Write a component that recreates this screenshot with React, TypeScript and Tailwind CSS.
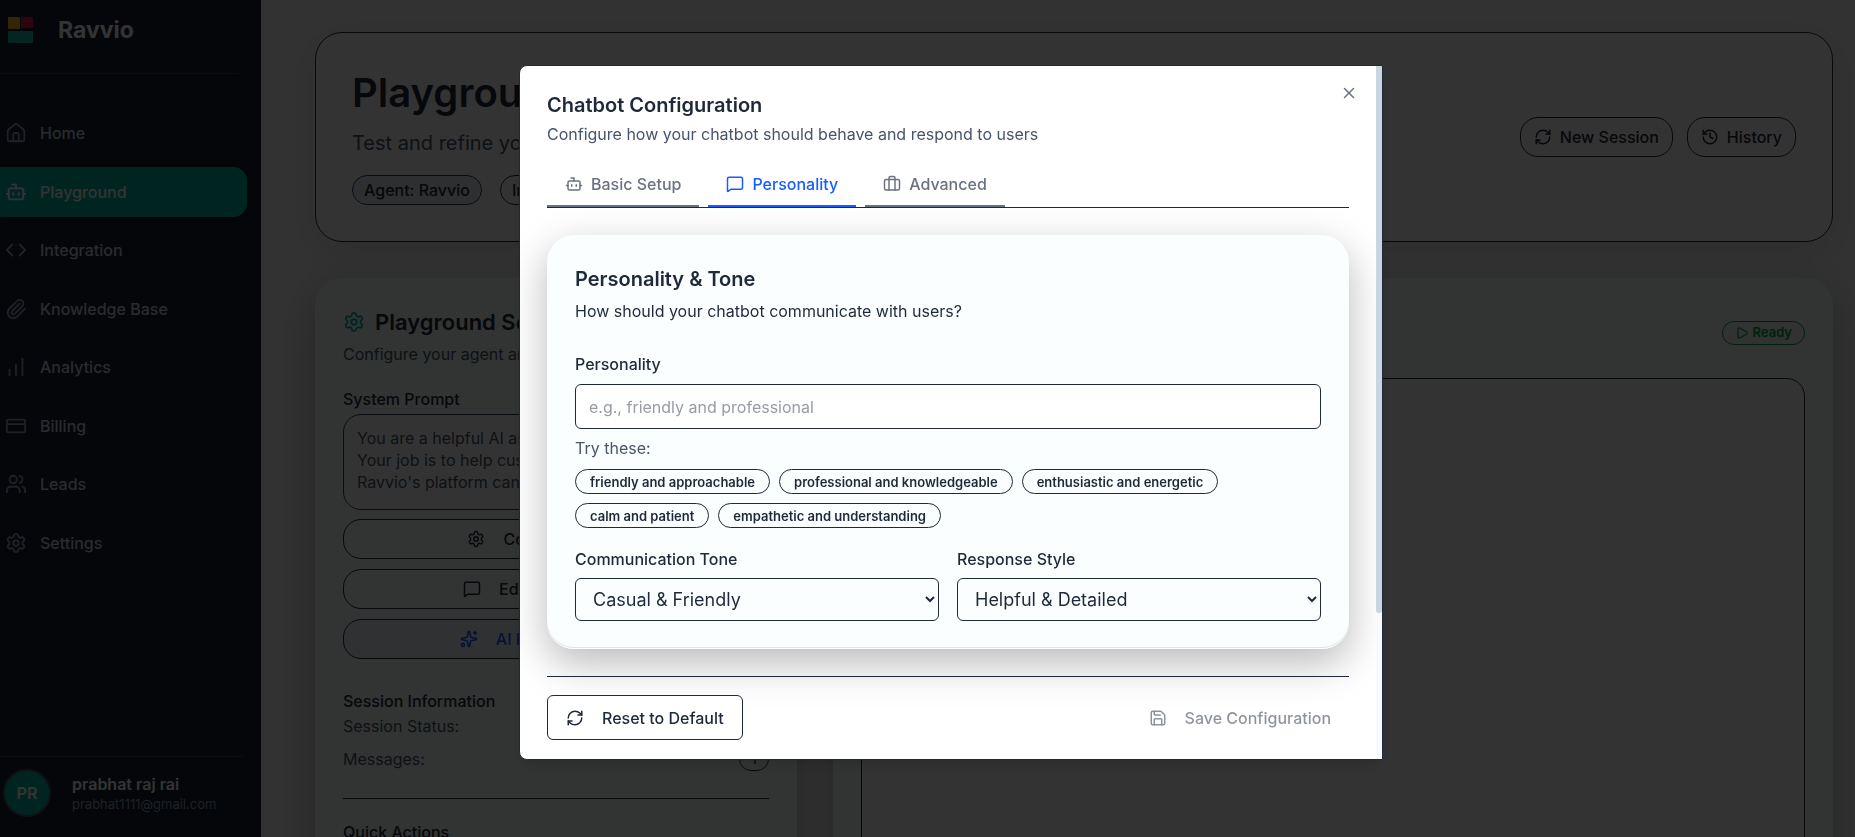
import React, { useState } from 'react';
import clsx from 'clsx';
import {
  Bot,
  ChartNoAxesColumnIncreasing,
  Code,
  CreditCard,
  History,
  House,
  LucideIcon,
  MessageSquare,
  Paperclip,
  Play,
  RefreshCw,
  Save,
  Settings,
  Sparkles,
  Users,
  X,
} from 'lucide-react';

interface NavItem {
  label: string;
  icon: LucideIcon;
}

const navItems: NavItem[] = [
  { label: 'Home', icon: House },
  { label: 'Playground', icon: Bot },
  { label: 'Integration', icon: Code },
  { label: 'Knowledge Base', icon: Paperclip },
  { label: 'Analytics', icon: ChartNoAxesColumnIncreasing },
  { label: 'Billing', icon: CreditCard },
  { label: 'Leads', icon: Users },
  { label: 'Settings', icon: Settings },
];

const suggestions = [
  'friendly and approachable',
  'professional and knowledgeable',
  'enthusiastic and energetic',
  'calm and patient',
  'empathetic and understanding',
];

// two vertical straps with rounded outer corners
const LuggageIcon: React.FC = () => (
  <svg width="18" height="18" viewBox="0 0 24 24" fill="none" stroke="currentColor" strokeWidth="2" strokeLinecap="round" strokeLinejoin="round">
    <path d="M16 20V4a2 2 0 0 0-2-2h-4a2 2 0 0 0-2 2v16" />
    <rect width="20" height="14" x="2" y="6" rx="2" />
  </svg>
);

const Sidebar: React.FC = () => {
  return (
    <aside className="w-[261px] shrink-0 h-full flex flex-col bg-[#18202f]">
      <div className="h-[74px] mr-[22px] pl-2 pb-[13px] flex items-center gap-[25px] border-b border-[#334155]">
        <svg width="25" height="26" viewBox="0 0 25 26">
          <rect x="0" y="0" width="12" height="12" rx="1" fill="#fbbf24" />
          <rect x="13" y="0" width="12" height="11" rx="1" fill="#e11d48" />
          <rect x="0" y="14" width="25" height="12" rx="1" fill="#14b8a6" />
        </svg>
        <span className="text-[23px] leading-7 font-bold text-white">Ravvio</span>
      </div>

      <nav className="h-[460px] mt-[34px] mr-[14px] flex flex-col justify-between">
        {navItems.map(({ label, icon: Icon }) => (
          <a
            key={label}
            href="#"
            className={clsx(
              'h-[50px] pl-[5px] flex items-center gap-[13px] rounded-r-[14px] text-base font-medium',
              label === 'Playground' ? 'bg-teal-500 text-white shadow-lg' : 'text-slate-300'
            )}
          >
            <Icon size={22} className={label === 'Playground' ? 'text-white' : 'text-slate-400'} />
            {label}
          </a>
        ))}
      </nav>

      <div className="mt-auto mr-[18px] pt-3 pb-5 pl-[3px] flex items-center gap-[21px] border-t border-[#334155]">
        <div className="size-12 rounded-full border-2 border-slate-600 bg-teal-500 flex items-center justify-center text-base font-semibold text-white">
          PR
        </div>
        <div>
          <p className="text-base leading-[22px] font-semibold text-white">prabhat raj rai</p>
          <p className="text-[13px] leading-[18px] text-slate-400">prabhat1111@gmail.com</p>
        </div>
      </div>
    </aside>
  );
};

const PageHeader: React.FC = () => {
  return (
    <header className="h-[210px] shrink-0 px-9 flex items-center justify-between bg-white border border-gray-800 rounded-[27px] shadow-[0_10px_40px_rgba(0,0,0,0.1)]">
      <div>
        <h1 className="text-[40px] leading-[48px] font-semibold text-gray-800">Playground</h1>
        <p className="mt-3 text-xl leading-7 text-slate-600">Test and refine your agent</p>
        <div className="mt-[18px] flex gap-[18px]">
          <span className="h-[30px] px-[11px] flex items-center rounded-full border border-slate-700 bg-slate-200 text-base font-medium text-gray-800">
            Agent: Ravvio
          </span>
          <span className="h-[30px] px-[11px] flex items-center rounded-full border border-gray-800 text-base font-medium text-gray-800">
            In Testing
          </span>
        </div>
      </div>
      <div className="flex gap-[14px]">
        <button className="h-10 px-[13px] flex items-center gap-2 rounded-[18px] border border-gray-800 text-base font-medium text-gray-800">
          <RefreshCw size={18} />
          New Session
        </button>
        <button className="h-10 px-[13px] flex items-center gap-2 rounded-[18px] border border-gray-800 text-base font-medium text-gray-800">
          <History size={18} />
          History
        </button>
      </div>
    </header>
  );
};

const SettingsCard: React.FC = () => {
  const buttonClass =
    'w-full h-10 flex items-center justify-center gap-[18px] rounded-[18px] border border-gray-800 text-base font-medium';

  return (
    <section className="w-[482px] shrink-0 p-7 bg-[#fafffe] rounded-[27px] shadow-[0_14px_40px_rgba(0,0,0,0.28)]">
      <h2 className="mt-0.5 flex items-center gap-[10px] text-[22px] leading-7 font-semibold text-gray-800">
        <Settings size={22} className="text-teal-500" />
        Playground Settings
      </h2>
      <p className="mt-[7px] text-base leading-[22px] text-slate-600">Configure your agent and test it</p>
      <label htmlFor="prompt" className="mt-[23px] block text-base leading-[22px] font-medium text-gray-800">
        System Prompt
      </label>
      <textarea
        id="prompt"
        readOnly
        className="mt-1 block w-full h-24 px-[13px] py-3 resize-none overflow-hidden rounded-[18px] border border-slate-700 bg-white text-base leading-[22px] text-slate-600"
        value={"You are a helpful AI assistant for Ravvio.\nYour job is to help customers understand how\nRavvio's platform can help them."}
      />
      <div className="mt-[9px] flex flex-col gap-[10px]">
        <button className={clsx(buttonClass, 'text-gray-800')}>
          <Settings size={18} />
          Configure Chatbot
        </button>
        <button className={clsx(buttonClass, 'text-gray-800')}>
          <MessageSquare size={18} />
          Edit System Prompt
        </button>
        <button className={clsx(buttonClass, 'bg-indigo-50 text-blue-600')}>
          <Sparkles size={18} />
          AI Prompt Generator
        </button>
      </div>
      <h3 className="mt-[31px] text-base leading-[22px] font-medium text-gray-800">Session Information</h3>
      <div className="mt-[3px] flex justify-between text-base leading-[22px] text-slate-600">
        <span>Session Status:</span>
        <span>Active</span>
      </div>
      <div className="mt-[10px] flex items-center justify-between text-base leading-[22px] text-slate-600">
        <span>Messages:</span>
        <span className="h-6 w-[30px] flex items-center justify-center rounded-full border border-gray-800 text-[13px] font-semibold">1</span>
      </div>
      <hr className="mt-[27px] border-gray-800" />
      <h3 className="mt-[22px] text-base leading-[22px] font-medium text-gray-800">Quick Actions</h3>
    </section>
  );
};

const ChatCard: React.FC = () => {
  return (
    <section className="flex-1 p-7 flex flex-col bg-[#fafffe] rounded-[27px] shadow-[0_14px_40px_rgba(0,0,0,0.28)]">
      <div className="h-[72px] pt-[15px] flex items-start justify-end">
        <span className="h-6 px-3 flex items-center gap-1 rounded-full border border-green-600 bg-green-50 text-[13px] font-semibold text-green-600">
          <Play size={14} />
          Ready
        </span>
      </div>
      <div className="flex-1 rounded-[18px] border border-gray-800 bg-white" />
    </section>
  );
};

const SelectField: React.FC<{ id: string; label: string; options: string[] }> = ({ id, label, options }) => {
  return (
    <div>
      <label htmlFor={id} className="block text-base leading-[22px] font-medium">
        {label}
      </label>
      <select id={id} className="mt-2 block w-full h-[43px] px-[13px] rounded-md border border-gray-800 bg-transparent text-lg">
        {options.map((option) => (
          <option key={option}>{option}</option>
        ))}
      </select>
    </div>
  );
};

const tabs = [
  { label: 'Basic Setup', icon: <Bot size={18} /> },
  { label: 'Personality', icon: <MessageSquare size={18} /> },
  { label: 'Advanced', icon: <LuggageIcon /> },
];

const ConfigDialog: React.FC = () => {
  const [activeTab, setActiveTab] = useState('Personality');
  const [personality, setPersonality] = useState('');

  return (
    <div
      role="dialog"
      aria-labelledby="dialog-title"
      className="relative w-full max-w-[864px] pt-[27px] pb-[19px] pl-[27px] pr-[33px] overflow-hidden rounded-l-lg border border-gray-800 bg-white text-gray-800 shadow-lg"
    >
      <button aria-label="Close" className="absolute top-[18px] right-[24px] text-gray-500">
        <X size={18} />
      </button>
      <div className="absolute top-0 right-0 w-[6px] h-full bg-slate-50">
        <div className="h-[79%] rounded-b-full bg-slate-300" />
      </div>

      <h2 id="dialog-title" className="text-xl leading-6 font-semibold">Chatbot Configuration</h2>
      <p className="mt-[6px] text-base leading-[22px] text-slate-600">
        Configure how your chatbot should behave and respond to users
      </p>

      <div className="mt-[18px] flex gap-[9px] border-b border-gray-800">
        {tabs.map(({ label, icon }) => (
          <button
            key={label}
            onClick={() => setActiveTab(label)}
            className={clsx(
              'h-11 px-[18px] flex items-center gap-2 border-b-2 text-base font-medium',
              activeTab === label ? 'border-blue-600 text-blue-600' : 'border-gray-500 text-gray-500'
            )}
          >
            {icon}
            {label}
          </button>
        ))}
      </div>

      <section className="mt-[27px] p-7 rounded-[27px] bg-[#fafeff] shadow-[0_14px_40px_rgba(0,0,0,0.28),inset_0_-1px_0_#ffffff,inset_0_-2px_0_#dfe4e4]">
        <h3 className="text-xl leading-8 font-semibold">Personality &amp; Tone</h3>
        <p className="mt-[5px] text-base leading-[22px]">How should your chatbot communicate with users?</p>

        <label htmlFor="personality" className="mt-[31px] block text-base leading-[22px] font-medium">
          Personality
        </label>
        <input
          id="personality"
          type="text"
          value={personality}
          onChange={(e) => setPersonality(e.target.value)}
          placeholder="e.g., friendly and professional"
          className="mt-[9px] block w-full h-[45px] px-[13px] rounded-md border border-gray-800 bg-white text-base placeholder:text-[#979ca4]"
        />

        <p className="mt-2 text-base leading-[22px] text-gray-600">Try these:</p>
        <div className="mt-[10px] flex flex-wrap gap-[9px]">
          {suggestions.map((text) => (
            <button
              key={text}
              onClick={() => setPersonality(text)}
              className="h-[25px] px-[14px] rounded-full border border-gray-800 text-[13px] leading-[18px] font-semibold"
            >
              {text}
            </button>
          ))}
        </div>

        <div className="mt-5 grid grid-cols-2 gap-[18px]">
          <SelectField id="tone" label="Communication Tone" options={['Casual & Friendly', 'Professional']} />
          <SelectField id="style" label="Response Style" options={['Helpful & Detailed', 'Short & Direct']} />
        </div>
      </section>

      <div className="mt-[27px] pt-[18px] flex justify-between border-t border-gray-800">
        <button className="h-[45px] px-[18px] flex items-center gap-[18px] rounded-md border border-gray-800 bg-white text-base font-medium">
          <RefreshCw size={18} />
          Reset to Default
        </button>
        <button disabled className="h-[45px] px-[18px] flex items-center gap-[18px] text-base font-medium opacity-50">
          <Save size={18} />
          Save Configuration
        </button>
      </div>
    </div>
  );
};

function App() {
  return (
    <div className="h-screen flex overflow-hidden bg-[#fafafa] font-[Inter,sans-serif]">
      <Sidebar />
      <main className="flex-1 h-full pt-8 pl-[54px] pr-[22px] flex flex-col gap-9 overflow-hidden">
        <PageHeader />
        <div className="h-[800px] shrink-0 flex gap-9">
          <SettingsCard />
          <ChatCard />
        </div>
      </main>
      <div className="fixed inset-0 pl-[47px] pb-3 flex items-center justify-center bg-black/80">
        <ConfigDialog />
      </div>
    </div>
  );
}

export default App;
